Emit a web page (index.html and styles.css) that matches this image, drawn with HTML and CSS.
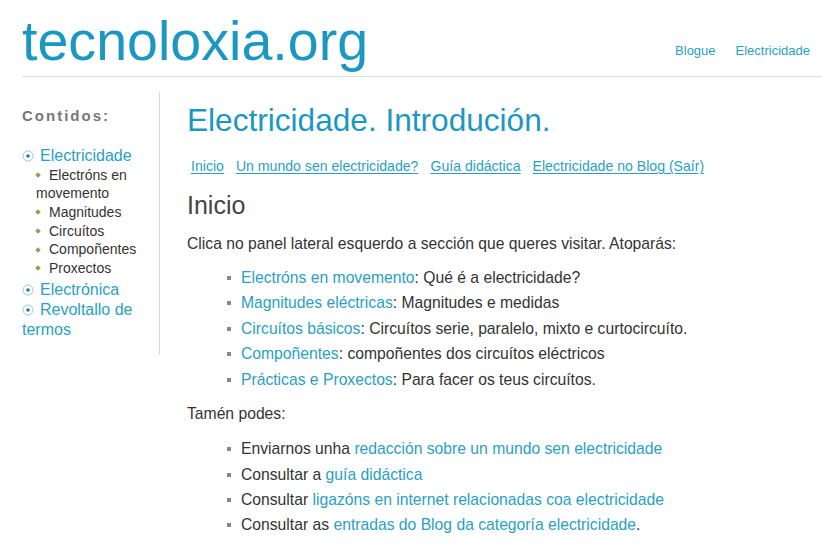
FILE: index.html
```html
<!DOCTYPE html>
<html lang="gl">
<head>
<meta charset="utf-8">
<title>tecnoloxia.org - Electricidade</title>
<link rel="stylesheet" href="styles.css">
</head>
<body>
<header class="site-header">
  <div class="site-title">tecnoloxia.org</div>
  <nav class="top-nav">
    <a href="#">Blogue</a>
    <a href="#">Electricidade</a>
  </nav>
</header>
<div class="layout">
  <aside class="sidebar">
    <h3 class="side-title">Contidos:</h3>
    <ul class="side-menu">
      <li class="side-item"><a href="#"><svg class="circ" width="12" height="12" viewBox="0 0 12 12"><circle cx="6" cy="6" r="5" fill="#fff" stroke="#9cc9d8" stroke-width="1"/><circle cx="6" cy="6" r="1.8" fill="#2a7f9c"/></svg>Electricidade</a>
        <ul class="sub-menu">
          <li><span class="dia"></span>Electróns en movemento</li>
          <li><span class="dia"></span>Magnitudes</li>
          <li><span class="dia"></span>Circuítos</li>
          <li><span class="dia"></span>Compoñentes</li>
          <li><span class="dia"></span>Proxectos</li>
        </ul>
      </li>
      <li class="side-item"><a href="#"><svg class="circ" width="12" height="12" viewBox="0 0 12 12"><circle cx="6" cy="6" r="5" fill="#fff" stroke="#9cc9d8" stroke-width="1"/><circle cx="6" cy="6" r="1.8" fill="#2a7f9c"/></svg>Electrónica</a></li>
      <li class="side-item"><a href="#"><svg class="circ" width="12" height="12" viewBox="0 0 12 12"><circle cx="6" cy="6" r="5" fill="#fff" stroke="#9cc9d8" stroke-width="1"/><circle cx="6" cy="6" r="1.8" fill="#2a7f9c"/></svg>Revoltallo de termos</a></li>
    </ul>
  </aside>
  <main class="content">
    <h1 class="page-title">Electricidade. Introdución.</h1>
    <nav class="sub-nav">
      <a href="#">Inicio</a>
      <a href="#">Un mundo sen electricidade?</a>
      <a href="#">Guía didáctica</a>
      <a href="#">Electricidade no Blog (Saír)</a>
    </nav>
    <h2 class="section-title">Inicio</h2>
    <p class="text">Clica no panel lateral esquerdo a sección que queres visitar. Atoparás:</p>
    <ul class="list">
      <li><a href="#">Electróns en movemento</a>: Qué é a electricidade?</li>
      <li><a href="#">Magnitudes eléctricas</a>: Magnitudes e medidas</li>
      <li><a href="#">Circuítos básicos</a>: Circuítos serie, paralelo, mixto e curtocircuíto.</li>
      <li><a href="#">Compoñentes</a>: compoñentes dos circuítos eléctricos</li>
      <li><a href="#">Prácticas e Proxectos</a>: Para facer os teus circuítos.</li>
    </ul>
    <p class="text">Tamén podes:</p>
    <ul class="list list-second">
      <li>Enviarnos unha <a href="#">redacción sobre un mundo sen electricidade</a></li>
      <li>Consultar a <a href="#">guía didáctica</a></li>
      <li>Consultar <a href="#">ligazóns en internet relacionadas coa electricidade</a></li>
      <li>Consultar as <a href="#">entradas do Blog da categoría electricidade</a>.</li>
    </ul>
  </main>
</div>
</body>
</html>
```

FILE: styles.css
```css
html, body {
  margin: 0;
  padding: 0;
  background: #fff;
}
body {
  font-family: "Liberation Sans", Arial, sans-serif;
  color: #333;
}
a {
  color: #2a9fc4;
  text-decoration: none;
}

.site-header {
  margin-left: 22px;
  padding: 13px 12px 7px 0;
  display: flex;
  justify-content: space-between;
  align-items: flex-end;
  border-bottom: 1px solid #dcdcdc;
}
.site-title {
  font-size: 55.6px;
  line-height: 56px;
  color: #1b98c2;
}
.top-nav {
  display: flex;
  gap: 20px;
  font-size: 13px;
  line-height: 16px;
  padding-bottom: 10px;
}
.top-nav a {
  color: #2a9fc4;
}

.layout {
  display: flex;
  align-items: flex-start;
  margin-top: 15px;
}
.sidebar {
  width: 123px;
  padding: 14px 14px 16px 22px;
  border-right: 1px solid #d8d8d8;
  flex: none;
}
.side-title {
  margin: 0 0 20px 0;
  font-size: 15px;
  line-height: 20px;
  font-weight: bold;
  letter-spacing: 2px;
  color: #777;
}
.side-menu {
  list-style: none;
  margin: 0;
  padding: 0;
}
.side-item {
  font-size: 16px;
  line-height: 19.5px;
}
.side-item + .side-item {
  margin-top: 1px;
}
.side-item > a {
  color: #2a9fc4;
}
.circ {
  display: inline-block;
  vertical-align: -1px;
  margin-right: 6px;
}
.sub-menu {
  list-style: none;
  margin: 0 0 2px 0;
  padding: 0 0 0 14px;
  font-size: 14px;
  line-height: 18.7px;
  color: #333;
}
.dia {
  display: inline-block;
  width: 4px;
  height: 4px;
  background: #a39a55;
  transform: rotate(45deg);
  margin: 0 9px 2px 0;
  vertical-align: middle;
}

.content {
  flex: 1;
  padding-left: 27px;
  min-width: 0;
}
.page-title {
  margin: 9px 0 0 0;
  font-size: 31.6px;
  line-height: 38px;
  font-weight: normal;
  color: #1b98c2;
}
.sub-nav {
  margin-top: 18px;
  padding-left: 4px;
  display: flex;
  gap: 12px;
  font-size: 14.1px;
  line-height: 18px;
}
.sub-nav a {
  text-decoration: underline;
  text-underline-offset: 2px;
}
.section-title {
  margin: 15px 0 0 0;
  font-size: 25px;
  line-height: 30px;
  font-weight: normal;
  color: #444;
}
.text {
  margin: 11px 0 0 0;
  font-size: 15.7px;
  line-height: 25.6px;
}
.list {
  list-style: none;
  margin: 8px 0 8px 0;
  padding: 0 0 0 40px;
  font-size: 15.7px;
  line-height: 25.6px;
}
.list li::before {
  content: "";
  display: inline-block;
  width: 4px;
  height: 4px;
  background: #888;
  margin-right: 10px;
  vertical-align: 3px;
}
.list + .text {
  margin-top: 0;
}
.list-second {
  margin-top: 10px;
}
.list-second li {
  line-height: 25.4px;
}
```
